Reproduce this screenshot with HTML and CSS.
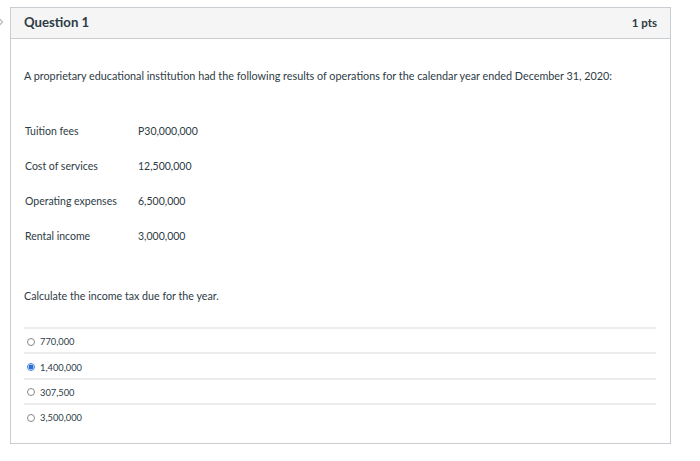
FILE: index.html
```html
<!DOCTYPE html>
<html>
<head>
<meta charset="utf-8">
<link rel="stylesheet" href="styles.css">
</head>
<body>
<div class="page">
  <svg class="chev" width="6" height="10" viewBox="0 0 6 10"><path d="M0.5 0.8 L4.5 5 L0.5 9.2" fill="none" stroke="#b5b5b5" stroke-width="1.1"/></svg>
  <div class="card">
    <div class="header">
      <span class="title">Question 1</span>
      <span class="pts">1 pts</span>
    </div>
    <div class="body">
      <p class="intro">A proprietary educational institution had the following results of operations for the calendar year ended December 31, 2020:</p>
      <div class="table">
        <span>Tuition fees</span><span>P30,000,000</span>
        <span>Cost of services</span><span>12,500,000</span>
        <span>Operating expenses</span><span>6,500,000</span>
        <span>Rental income</span><span>3,000,000</span>
      </div>
      <p class="ask">Calculate the income tax due for the year.</p>
      <div class="answers">
        <div class="ans"><span class="radio"></span><span>770,000</span></div>
        <div class="ans"><span class="radio on"></span><span>1,400,000</span></div>
        <div class="ans"><span class="radio"></span><span>307,500</span></div>
        <div class="ans"><span class="radio"></span><span>3,500,000</span></div>
      </div>
    </div>
  </div>
</div>
</body>
</html>
```
FILE: styles.css
```css
* { box-sizing: border-box; }
body { margin: 0; background: #fff; font-family: Lato, "Open Sans", sans-serif; color: #2d3b45; }
.page { position: relative; padding: 7px 30px 0 10px; }
.chev { position: absolute; left: -2px; top: 17px; }
.card { border: 1px solid #c7cdd1; width: 661px; height: 437px; }
.header { height: 31px; background: #f5f5f5; border-bottom: 1px solid #c7cdd1; display: flex; justify-content: space-between; align-items: center; padding: 0 13px 2px 13px; }
.title { font-weight: 700; font-size: 13.2px; color: #2d3b45; }
.pts { font-weight: 700; font-size: 11.5px; color: #2d3b45; }
.body { padding: 0 13px; font-size: 11px; }
.intro { margin: 30px 0 0 0; font-size: 10.8px; line-height: 14px; }
.table { display: grid; grid-template-columns: 113px auto; row-gap: 21px; margin: 41px 0 0 1px; line-height: 14px; font-size: 10.5px; }
.ask { margin: 46px 0 0 0; font-size: 10.7px; line-height: 14px; }
.answers { margin-top: 24px; width: 632px; }
.ans { height: 25.4px; border-top: 2px solid #ececec; display: flex; align-items: center; padding-left: 3px; gap: 5px; font-size: 9.3px; padding-top: 2px; }
.radio { width: 8px; height: 8px; border-radius: 50%; border: 1px solid #8a8a8a; background: #fff; display: inline-block; }
.radio.on { border-color: #3d7fd6; background: radial-gradient(circle, #2b6fd6 0 2.2px, #fff 2.7px); }
```
